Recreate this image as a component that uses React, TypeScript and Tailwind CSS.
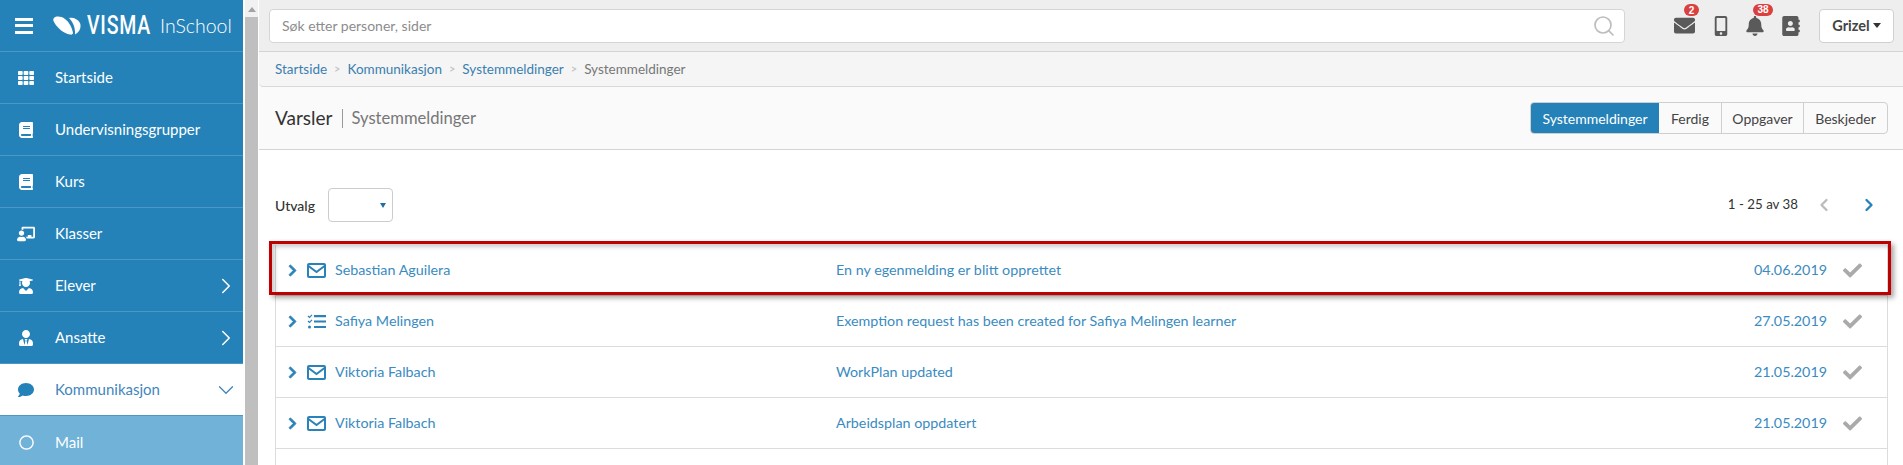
import { FaAddressBook, FaBell, FaBook, FaCheck, FaChevronRight, FaComment, FaMobileAlt, FaTh, FaUserTie, FaUserGraduate, FaChalkboardTeacher, FaEnvelope, FaRegCircle } from "react-icons/fa";
import { ChevronDown, ChevronLeft, ChevronRight, Search } from "lucide-react";
import type { ReactNode } from "react";

function SideItem({ icon, label, arrow }: { icon: ReactNode; label: string; arrow?: boolean }) {
  return (
    <div className="flex h-[52px] items-center border-b border-[#4b97c5] pr-[4px] text-white">
      <span className="flex w-[55px] shrink-0 justify-center pr-[3px] text-[16px]">{icon}</span>
      <span className="flex-1 text-[15px]">{label}</span>
      {arrow && <ChevronRight size={26} strokeWidth={1.4} />}
    </div>
  );
}

function MailIcon() {
  return (
    <svg width="19" height="15" viewBox="0 0 19 15" fill="none" stroke="#2a82b8" strokeWidth="2">
      <rect x="1" y="1" width="17" height="13" rx="1" />
      <path d="M1.5 3 L9.5 9 L17.5 3" />
    </svg>
  );
}

function TaskIcon() {
  return (
    <svg width="19" height="15" viewBox="0 0 19 15" fill="none" stroke="#2a82b8">
      <path d="M1 2 L2.5 3.5 L5 .8 M1 7 L2.5 8.5 L5 5.8" strokeWidth="1.2" />
      <circle cx="2.5" cy="13" r="1.5" fill="#2a82b8" stroke="none" />
      <path d="M7 2.2 H19 M7 7.5 H19 M7 13 H19" strokeWidth="2.2" />
    </svg>
  );
}

function Row({ icon, name, text, date }: { icon: ReactNode; name: string; text: string; date: string }) {
  return (
    <div className="flex h-[51px] items-center border-b border-[#dcdcdc] text-[14.3px] text-[#3a8bbf]">
      <FaChevronRight className="ml-[10px] text-[#2a82b8]" size={13} stroke="currentColor" strokeWidth={35} />
      <span className="ml-[8px] flex w-[19px] justify-center">{icon}</span>
      <span className="ml-[9px] w-[501px]">{name}</span>
      <span className="flex-1">{text}</span>
      <span>{date}</span>
      <FaCheck className="ml-[16px] mr-[25px] text-[#aaaaaa]" size={19} />
    </div>
  );
}

export default function App() {
  return (
    <div className="flex h-[465px] w-[1903px] overflow-hidden bg-white font-['Lato','Open_Sans',sans-serif] text-[#333]">
      {/* Sidebar */}
      <aside className="w-[243px] shrink-0 bg-[#2582b8]">
        <div className="flex h-[52px] items-center border-b border-[#4b97c5] text-white">
          <div className="ml-[15px] flex w-[18px] flex-col gap-[3.5px]">
            <span className="h-[3px] bg-white" />
            <span className="h-[3px] bg-white" />
            <span className="h-[3px] bg-white" />
          </div>
          <svg className="ml-[20px]" width="28" height="19" viewBox="0 0 28 19" fill="white">
            <path d="M1 2 C3 0 8 0 12 3 C16 6 19 11 20 17 C20 18 19 19 17 18.5 C11 17.5 4 12 1 6 C0 4 0 3 1 2 Z" />
            <path d="M16 2 C20 1 25 3 27 7 C28.5 11 27 16 22 18.5 C22.5 12 20 6 16 2 Z" />
          </svg>
          <span className="ml-[6px] origin-left scale-x-[0.78] font-['Roboto',sans-serif] text-[25px] leading-none font-medium tracking-[1px]">VISMA</span>
          <span className="ml-[-9px] text-[19.5px] font-light">InSchool</span>
        </div>
        <SideItem icon={<FaTh />} label="Startside" />
        <SideItem icon={<FaBook />} label="Undervisningsgrupper" />
        <SideItem icon={<FaBook />} label="Kurs" />
        <SideItem icon={<FaChalkboardTeacher size={18} />} label="Klasser" />
        <SideItem icon={<FaUserGraduate />} label="Elever" arrow />
        <SideItem icon={<FaUserTie />} label="Ansatte" arrow />
        <div className="flex h-[52px] items-center border-b border-[#4b97c5] bg-white pr-[4px] text-[#3f86bd]">
          <span className="flex w-[55px] shrink-0 justify-center pr-[3px] text-[16px] text-[#2582b8]"><FaComment /></span>
          <span className="flex-1 text-[15px]">Kommunikasjon</span>
          <ChevronDown size={26} strokeWidth={1.2} />
        </div>
        <div className="flex h-[52px] items-center bg-[#70b2d8] text-white">
          <span className="flex w-[55px] shrink-0 justify-center pr-[3px] text-[15px]"><FaRegCircle /></span>
          <span className="text-[15px]">Mail</span>
        </div>
      </aside>

      {/* Scrollbar */}
      <div className="ml-[2px] w-[13px] shrink-0 bg-[#bfbfbf]">
        <div className="flex h-[17px] justify-center bg-[#f1f1f1] pt-[7px]">
          <div className="h-0 w-0 border-x-[4px] border-b-[5px] border-x-transparent border-b-[#a3a3a3]" />
        </div>
      </div>

      {/* Main */}
      <main className="w-0 flex-1 pl-[1px]">
        <header className="flex h-[52px] items-center border-b border-[#d4d4d4] bg-[#eeeeee] pl-[10px]">
          <div className="flex h-[34px] w-[1356px] items-center justify-between rounded-[4px] border border-[#d5d5d5] bg-white pl-[12px] pr-[8px] text-[14px] text-[#8c8c8c]">
            <span>Søk etter personer, sider</span>
            <Search className="text-[#bdbdbd]" size={24} strokeWidth={1.7} />
          </div>
          <div className="relative ml-[49px] text-[#5a5a5a]">
            <FaEnvelope size={21} />
            <span className="absolute left-[10px] top-[-11px] flex h-[12px] w-[15px] items-center justify-center rounded-full bg-[#d9403f] font-['Liberation_Sans',sans-serif] text-[10px] font-bold text-white">2</span>
          </div>
          <div className="ml-[16px] text-[#5a5a5a]"><FaMobileAlt size={20} /></div>
          <div className="relative ml-[14px] text-[#5a5a5a]">
            <FaBell size={20} />
            <span className="absolute left-[8px] top-[-12px] flex h-[12px] w-[20px] items-center justify-center rounded-full bg-[#d9403f] font-['Liberation_Sans',sans-serif] text-[10px] font-bold text-white">38</span>
          </div>
          <div className="ml-[16px] text-[#5a5a5a]"><FaAddressBook size={20} /></div>
          <div className="ml-[18px] flex h-[34px] w-[75px] shrink-0 items-center justify-center gap-[3px] rounded-[4px] border border-[#d0d0d0] bg-white text-[14.5px] font-bold text-[#444]">
            Grizel
            <span className="h-0 w-0 border-x-[4px] border-t-[5px] border-x-transparent border-t-[#333]" />
          </div>
        </header>

        <nav className="flex h-[35px] items-center gap-[7px] rounded-bl-[4px] border-b border-[#d9d9d9] bg-[#f5f5f5] pl-[16px] text-[13.5px] text-[#3a7fb0]">
          <span>Startside</span>
          <span className="text-[11px] text-[#bbb]">&gt;</span>
          <span>Kommunikasjon</span>
          <span className="text-[11px] text-[#bbb]">&gt;</span>
          <span>Systemmeldinger</span>
          <span className="text-[11px] text-[#bbb]">&gt;</span>
          <span className="text-[#777]">Systemmeldinger</span>
        </nav>

        <div className="flex h-[63px] items-center justify-between border-b border-[#d4d4d4] bg-[#fafafa] pl-[16px] pr-[15px]">
          <div className="flex items-center">
            <span className="text-[19px] text-[#333]">Varsler</span>
            <span className="ml-[10px] h-[19px] w-px bg-[#999]" />
            <span className="ml-[8px] text-[16.6px] text-[#777]">Systemmeldinger</span>
          </div>
          <div className="flex h-[32px] overflow-hidden rounded-[4px] border border-[#cfcfcf] text-[14px] text-[#444]">
            <span className="flex w-[128px] items-center justify-center bg-[#2582b8] text-white">Systemmeldinger</span>
            <span className="flex w-[63px] items-center justify-center border-r border-[#cfcfcf]">Ferdig</span>
            <span className="flex w-[82px] items-center justify-center border-r border-[#cfcfcf]">Oppgaver</span>
            <span className="flex w-[83px] items-center justify-center">Beskjeder</span>
          </div>
        </div>

        <div className="flex h-[95px] items-center justify-between pl-[16px] pr-[24px] pt-[15px] text-[14px]">
          <div className="flex items-center">
            <span className="font-medium">Utvalg</span>
            <span className="ml-[13px] flex h-[34px] w-[65px] items-center justify-end rounded-[4px] border border-[#ccc] pr-[6px]">
              <span className="h-0 w-0 border-x-[3px] border-t-[5px] border-x-transparent border-t-[#1f6fa3]" />
            </span>
          </div>
          <div className="flex items-center">
            <span className="text-[13.3px]">1 - 25 av 38</span>
            <ChevronLeft className="ml-[16px] text-[#bbbbbb]" size={20} strokeWidth={2.8} />
            <ChevronRight className="ml-[25px] text-[#2582b8]" size={20} strokeWidth={2.8} />
          </div>
        </div>

        <div className="ml-[16px] mr-[15px] border-x border-[#dcdcdc]">
          <div className="relative">
            <div className="pointer-events-none absolute -left-[7px] -right-[4px] -top-[4px] bottom-[1px] z-10 border-[3px] border-[#c00000] shadow-[3px_3px_5px_rgba(0,0,0,0.35),inset_3px_3px_4px_rgba(0,0,0,0.2)]" />
            <Row icon={<MailIcon />} name="Sebastian Aguilera" text="En ny egenmelding er blitt opprettet" date="04.06.2019" />
          </div>
          <Row icon={<TaskIcon />} name="Safiya Melingen" text="Exemption request has been created for Safiya Melingen learner" date="27.05.2019" />
          <Row icon={<MailIcon />} name="Viktoria Falbach" text="WorkPlan updated" date="21.05.2019" />
          <Row icon={<MailIcon />} name="Viktoria Falbach" text="Arbeidsplan oppdatert" date="21.05.2019" />
          <div className="h-[51px]" />
        </div>
      </main>
    </div>
  );
}
